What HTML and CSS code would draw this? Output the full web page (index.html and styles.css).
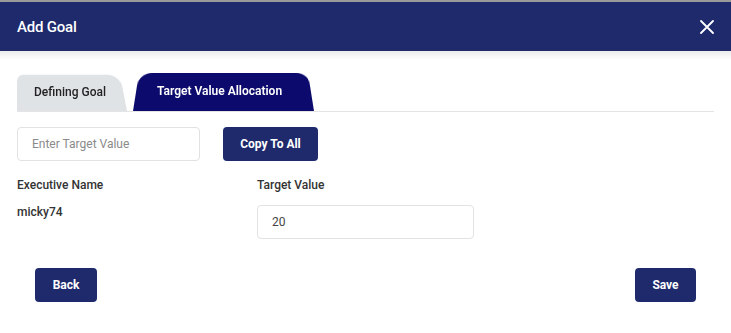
FILE: index.html
```html
<!DOCTYPE html>
<html>
<head>
<meta charset="utf-8">
<link rel="stylesheet" href="styles.css">
</head>
<body>
<div class="modal">
  <header class="modal-header">
    <span class="modal-title">Add Goal</span>
    <svg class="close" width="14" height="14" viewBox="0 0 14 14"><path d="M1 1 L13 13 M13 1 L1 13" stroke="#fff" stroke-width="1.8" fill="none" stroke-linecap="round"/></svg>
  </header>
  <div class="modal-body">
    <div class="tabs">
      <div class="tab tab-left">Defining Goal</div>
      <div class="tab tab-active">Target Value Allocation</div>
    </div>
    <div class="copy-row">
      <input class="field field-target" type="text" placeholder="Enter Target Value">
      <button class="btn btn-copy">Copy To All</button>
    </div>
    <div class="grid">
      <div class="col col-name">
        <div class="label">Executive Name</div>
        <div class="value">micky74</div>
      </div>
      <div class="col">
        <div class="label">Target Value</div>
        <input class="field field-value" type="text" value="20">
      </div>
    </div>
    <div class="footer">
      <button class="btn btn-back">Back</button>
      <button class="btn btn-save">Save</button>
    </div>
  </div>
</div>
</body>
</html>
```
FILE: styles.css
```css
* { box-sizing: border-box; }
html, body { margin: 0; padding: 0; background: #fff; }
body { font-family: Roboto, "Liberation Sans", sans-serif; width: 731px; height: 333px; overflow: hidden; }
.modal { border-top: 2px solid #9a9a9a; }
.modal-header {
  height: 49px; background: #1e2a6c; color: #fff;
  display: flex; align-items: center; justify-content: space-between;
  padding: 0 17px 0 17px;
}
.modal-title { font-size: 15px; font-weight: 500; letter-spacing: -0.2px; }
.modal-body {
  background: linear-gradient(#ebebeb 0px, #fff 9px);
  padding: 19px 17px 0 17px;
  height: 282px;
}
.tabs {
  display: flex; align-items: flex-end; height: 42px;
  border-bottom: 1px solid #e4e4e4;
}
.tab {
  position: relative; z-index: 0;
  height: 41px; display: flex; align-items: center;
  font-size: 12px; font-weight: 500;
}
.tab::before {
  content: ""; position: absolute; inset: 0; z-index: -1;
  border-radius: 9px 9px 0 0;
  transform: perspective(60px) rotateX(6deg);
}
.tab-left { width: 110px; padding-left: 17px; color: #222; margin-top: 2px; height: 39px; }
.tab-left::before { background: #e0e3e6; transform-origin: bottom left; border-radius: 7px 14px 0 0; }
.tab-active { width: 181px; margin-left: 6px; padding-left: 24px; color: #fff; font-weight: 600; }
.tab-active::before { background: #0c0b6d; transform-origin: bottom; border-radius: 14px 12px 0 0; }
.copy-row { display: flex; align-items: center; margin-top: 15px; gap: 23px; }
.field {
  height: 34px; border: 1px solid #e2e2e2; border-radius: 4px;
  font-family: Roboto, "Liberation Sans", sans-serif; font-size: 12px; color: #444;
  padding: 0 14px; outline: none; background: #fff;
}
.field::placeholder { color: #8a8a8a; }
.field-target { width: 183px; }
.btn {
  background: #1e2a6c; color: #fff; border: none; border-radius: 4px;
  font-family: Roboto, "Liberation Sans", sans-serif; font-size: 12px; font-weight: 700;
  height: 34px; padding: 0; cursor: pointer;
}
.btn-copy { width: 95px; }
.grid { display: flex; margin-top: 16px; }
.col-name { width: 240px; }
.label { font-size: 12px; font-weight: 500; color: #333; height: 16px; line-height: 16px; }
.value { font-size: 12px; font-weight: 500; color: #333; margin-top: 12px; }
.field-value { width: 217px; margin-top: 12px; }
.footer { display: flex; justify-content: space-between; margin-top: 29px; padding: 0 18px; }
.btn-back { width: 62px; }
.btn-save { width: 61px; }
```
